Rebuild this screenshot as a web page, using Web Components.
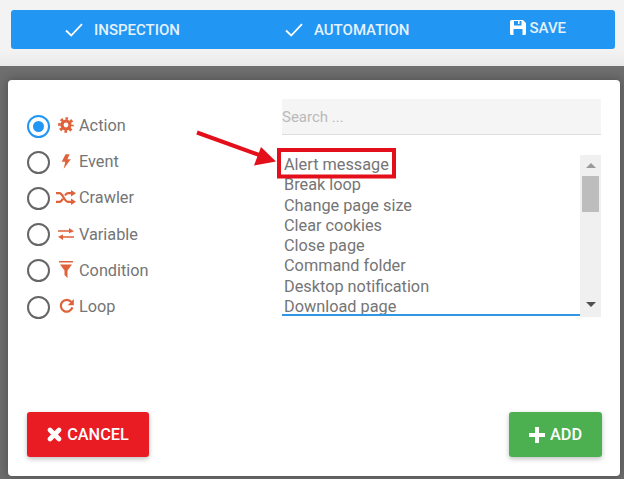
<!DOCTYPE html>
<html lang="en"><head><meta charset="utf-8"><title>Add step</title>
<style>html,body{margin:0;padding:0;background:#6e6e6e}body{font-family:Roboto,"Liberation Sans",sans-serif}</style>
</head><body>
<app-page>
  <top-bar slot="top">
    <bar-item style="margin-left:54px" kind="check">INSPECTION</bar-item>
    <bar-item style="margin-left:105px" kind="check">AUTOMATION</bar-item>
    <bar-item style="margin-left:100px" kind="save">SAVE</bar-item>
  </top-bar>
  <step-dialog>
    <radio-opt slot="kinds" icon="cog" checked>Action</radio-opt>
    <radio-opt slot="kinds" icon="bolt">Event</radio-opt>
    <radio-opt slot="kinds" icon="random">Crawler</radio-opt>
    <radio-opt slot="kinds" icon="exchange">Variable</radio-opt>
    <radio-opt slot="kinds" icon="filter">Condition</radio-opt>
    <radio-opt slot="kinds" icon="repeat">Loop</radio-opt>
    <search-box slot="search" placeholder="Search ..."></search-box>
    <option-list slot="list">
      <div>Alert message</div><div>Break loop</div><div>Change page size</div><div>Clear cookies</div>
      <div>Close page</div><div>Command folder</div><div>Desktop notification</div><div>Download page</div>
    </option-list>
    <action-btn slot="cancel" kind="cancel">CANCEL</action-btn>
    <action-btn slot="add" kind="add">ADD</action-btn>
  </step-dialog>
  <call-out></call-out>
</app-page>
<script>
const ICONS={
 check:'<svg width="18" height="14" viewBox="0 0 18 14"><path d="M1 7.5l5.2 5L17 1.2" fill="none" stroke="currentColor" stroke-width="1.8"/></svg>',
 save:'<svg width="16" height="15" viewBox="0 0 16 15"><path fill="currentColor" fill-rule="evenodd" d="M1.5 0H13l3 3v10.5a1.5 1.5 0 0 1-1.5 1.5h-13A1.5 1.5 0 0 1 0 13.500V1.500A1.500 1.500 0 0 1 1.500 0zM4 1v4.500h7.500V1H9.500v3H8V1zM3.500 9v6h9V9z"/></svg>',
 cog:'<svg width="16" height="16" viewBox="0 0 18 18" fill="none" stroke="currentColor"><circle cx="9" cy="9" r="4.500" stroke-width="3.600"/><circle cx="9" cy="9" r="7.300" stroke-width="3" stroke-dasharray="3 2.730" stroke-dashoffset="1.500"/></svg>',
 bolt:'<svg width="10" height="15" viewBox="0 0 11 16"><path fill="currentColor" d="M5 0h4.500L7 5.500h3.800L3 16l1.700-7.600H.8z"/></svg>',
 random:'<svg width="20" height="15" viewBox="0 0 20 15"><path fill="none" stroke="currentColor" stroke-width="2.200" d="M0 3.200h3.500c3.500 0 4.500 8.600 8.500 8.600h4M0 11.800h3.500c1.500 0 2.500-1.400 3.300-3M9 5.500c.8-1.300 1.700-2.300 3-2.300h4"/><path fill="currentColor" d="M15 0l5 3.200-5 3.200zM15 8.600l5 3.200-5 3.200z"/></svg>',
 exchange:'<svg width="16" height="12" viewBox="0 0 16 12"><path fill="currentColor" d="M0 2.300h11V0l5 3.200-5 2V3.800H0zM16 8.200H5V6.500L0 8.800l5 3.200V9.700h11z"/></svg>',
 filter:'<svg width="14" height="17" viewBox="0 0 14 17"><path fill="currentColor" d="M0 0h14v1.600H0zM1 3.500h12L8.500 9.500V17L5.500 14V9.500z"/></svg>',
 repeat:'<svg width="15" height="16" viewBox="0 0 16 17"><path fill="none" stroke="currentColor" stroke-width="2.400" d="M13.200 4.300A6.300 6.300 0 1 0 14.300 10"/><path fill="currentColor" d="M15.800 1v6.600H9.300z"/></svg>',
 times:'<svg width="15" height="15" viewBox="0 0 15 15"><path fill="none" stroke="currentColor" stroke-width="4.600" stroke-linecap="round" d="M3 3l9 9M12 3l-9 9"/></svg>',
 plus:'<svg width="16" height="16" viewBox="0 0 16 16"><path fill="currentColor" d="M6 0h4v6h6v4h-6v6H6v-6H0V6h6z"/></svg>'
};
function def(name,html,init){customElements.define(name,class extends HTMLElement{
  constructor(){super();this.attachShadow({mode:'open'}).innerHTML=html;}
  connectedCallback(){init&&init.call(this,this.shadowRoot);}
});}
def('app-page',`<style>:host{display:flex;flex-direction:column;position:relative;width:624px;height:479px;overflow:hidden;background:#6e6e6e;color:#757575}
.top{height:66px;background:linear-gradient(#f3f3f3 0,#f3f3f3 50px,#e9e9e9 66px);padding:10px 9px 0 11px;box-sizing:border-box}</style>
<div class="top"><slot name="top"></slot></div><slot></slot>`);
def('top-bar',`<style>:host{display:flex;align-items:center;height:39px;background:#2196f3;border-radius:3px;color:#fff}</style><slot></slot>`);
def('bar-item',`<style>:host{display:flex;align-items:center;font:500 15px/20px Roboto,sans-serif;color:#e4f2fe}
span{display:flex;margin-right:11px;color:#fff}:host([kind=save]){position:relative;top:-2px}:host([kind=save]) span{margin-right:4px}</style><span id="i"></span><slot></slot>`,
function(r){r.getElementById('i').innerHTML=ICONS[this.getAttribute('kind')];});
def('step-dialog',`<style>:host{display:flex;flex-direction:column;box-sizing:border-box;width:612px;height:396px;margin:14px 0 0 8px;padding:19px 18px 19px 19px;background:#fff;border-radius:4px;box-shadow:0 0 10px 2px rgba(0,0,0,.22)}
.main{display:grid;grid-template-columns:255px 319px;flex:1}.kinds{padding-top:9px}
.foot{display:flex;justify-content:space-between}</style>
<div class="main"><div class="kinds"><slot name="kinds"></slot></div><div><slot name="search"></slot><slot name="list"></slot></div></div>
<div class="foot"><slot name="cancel"></slot><slot name="add"></slot></div>`);
def('radio-opt',`<style>:host{display:flex;align-items:center;height:36.200px;font:16.300px/20px Roboto,sans-serif;color:#757575}
.r{box-sizing:border-box;width:23px;height:23px;border:2.500px solid #666;border-radius:50%;display:flex;align-items:center;justify-content:center}
:host([checked]) .r{border-color:#2196f3}:host([checked]) .r::after{content:"";width:11px;height:11px;border-radius:50%;background:#2196f3}
.i{width:20px;margin:0 3px 0 6px;display:flex;justify-content:center;color:#e0623a;position:relative;top:-1px}</style>
<div class="r"></div><div class="i" id="i"></div><slot></slot>`,
function(r){r.getElementById('i').innerHTML=ICONS[this.getAttribute('icon')];});
def('search-box',`<style>:host{display:block;height:36px;box-sizing:border-box;background:#f6f5f6;border-bottom:1px solid #dedede;margin-bottom:20px}
input{all:unset;display:block;width:100%;height:35px;font:15px Roboto,sans-serif;color:#757575}input::placeholder{color:#b9b9b9}</style><input>`,
function(r){r.querySelector('input').placeholder=this.getAttribute('placeholder');});
def('option-list',`<style>:host{display:flex;height:163px;width:319px;overflow:hidden}
.items{box-sizing:border-box;width:298px;height:161px;overflow:hidden;border-bottom:2px solid #2f97e6;padding-left:2px;font:16.300px/20.300px Roboto,sans-serif;color:#757575}
.sb{width:21px;height:162px;background:#f0f0f0;position:relative;display:flex;flex-direction:column;align-items:center}
.u,.d{width:0;height:0;border:5px solid transparent}.u{border-bottom:5px solid #9a9a9a;border-top:0;margin-top:8px}
.t{width:17px;height:36px;background:#bdbdbd;margin-top:8px}.d{border-top:5px solid #505050;border-bottom:0;margin-top:auto;margin-bottom:10px}</style>
<div class="items"><slot></slot></div><div class="sb"><div class="u"></div><div class="t"></div><div class="d"></div></div>`);
def('action-btn',`<style>:host{display:flex;align-items:center;justify-content:center;height:45px;border-radius:3px;color:#fff;font:500 16.300px/20px Roboto,sans-serif;box-shadow:0 2px 5px rgba(0,0,0,.25)}
:host([kind=cancel]){width:122px;background:#e91c24}:host([kind=add]){width:93px;background:#4caf50}
span{display:flex;margin-right:5px}</style><span id="i"></span><slot></slot>`,
function(r){r.getElementById('i').innerHTML=ICONS[this.getAttribute('kind')=='add'?'plus':'times'];});
def('call-out',`<style>:host{position:absolute;left:0;top:0;width:624px;height:479px;pointer-events:none}svg{display:block}</style>
<svg width="624" height="479"><rect x="279" y="150" width="115" height="26.500" fill="none" stroke="#e3101b" stroke-width="4"/>
<path d="M197 132.500L262 156" stroke="#e3101b" stroke-width="4"/><path d="M276 161.500L254 165.500L261 147z" fill="#e3101b"/></svg>`);
</script>
</body></html>
